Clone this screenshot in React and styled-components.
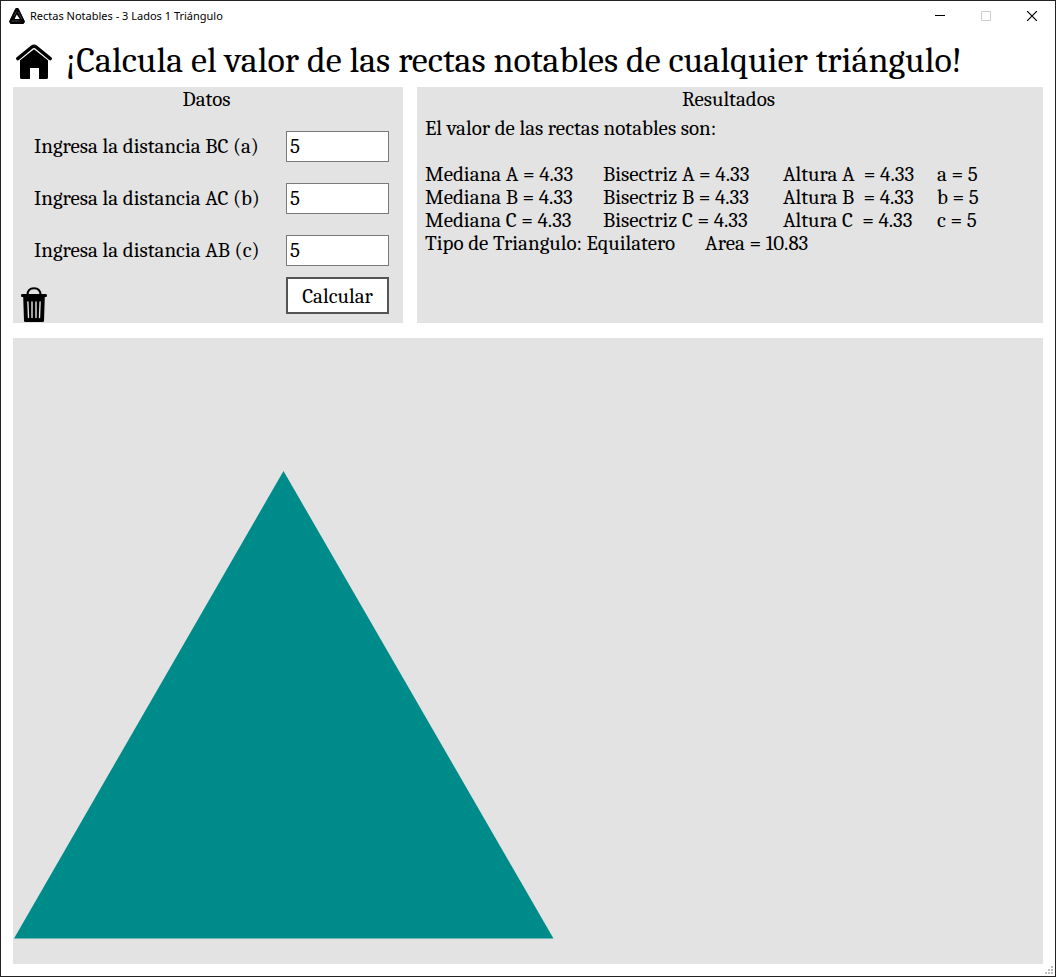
import React, { useState } from "react";
import styled, { createGlobalStyle } from "styled-components";

const GlobalStyle = createGlobalStyle`
  *, *::before, *::after { box-sizing: border-box; }
  body {
    margin: 0;
    background: #fff;
    color: #000;
    font-family: Cambria, Caladea, "Liberation Serif", serif;
    font-size: 21px;
    line-height: 23px;
  }
`;

const Window = styled.div`
  position: relative;
  display: flex;
  flex-direction: column;
  min-height: 100vh;
  border: 1px solid #222;
  background: #fff;
`;

const TitleBar = styled.header`
  display: flex;
  align-items: center;
  height: 30px;
  padding-left: 8px;
  font: 11px/16px "Noto Sans", "Open Sans", sans-serif;
`;

const WindowTitle = styled.span`
  flex: 1;
  margin-left: 5px;
`;

const WindowButton = styled.button`
  display: flex;
  align-items: center;
  justify-content: center;
  width: 46px;
  height: 30px;
  padding: 0;
  border: 0;
  background: none;
  color: #000;

  &:disabled { color: #ccc; }
`;

const Banner = styled.div`
  display: flex;
  align-items: center;
  height: 56px;
  padding: 4px 12px 0 15px;
  gap: 14px;
`;

const IconButton = styled.button`
  display: flex;
  padding: 0;
  border: 0;
  background: none;
  color: #000;
`;

const Heading = styled.h1`
  margin: 0;
  font-size: 36px;
  line-height: 42px;
  font-weight: 400;
  white-space: nowrap;
`;

const Content = styled.main`
  display: flex;
  flex: 1;
  flex-direction: column;
  gap: 15px;
  padding: 0 12px 12px;
`;

const Panels = styled.div`
  display: grid;
  grid-template-columns: 390px 1fr;
  gap: 14px;
`;

const Panel = styled.section`
  display: flex;
  flex-direction: column;
  min-height: 236px;
  background: #e3e3e3;
`;

const PanelTitle = styled.h2`
  margin: 0;
  padding: 0 3px 1px 0;
  font-size: 21px;
  line-height: 25px;
  font-weight: 400;
  text-align: center;
`;

const Form = styled.form`
  display: flex;
  flex: 1;
  flex-direction: column;
  padding: 18px 14px 0 21px;
`;

const Field = styled.label`
  display: flex;
  align-items: center;
  justify-content: space-between;
  height: 31px;
  margin-bottom: 21px;
`;

const NumberInput = styled.input`
  width: 103px;
  height: 31px;
  padding: 0 3px 1px;
  border: 1px solid #7a7a7a;
  border-radius: 0;
  background: #fff;
  color: #000;
  font: inherit;
  outline: 0;
`;

const Actions = styled.div`
  display: flex;
  justify-content: space-between;
  margin: -10px 0 0 -13px;
`;

const ClearButton = styled(IconButton)`
  padding-top: 10px;
`;

const CalculateButton = styled.button`
  width: 103px;
  height: 37px;
  padding: 1px 0 0;
  border: 2px solid #555;
  background: #fff;
  color: #000;
  font: inherit;
`;

const Results = styled.div`
  padding: 4px 8px;
`;

const Line = styled.p`
  margin: 0;
  white-space: pre;
`;

const ResultTable = styled.table`
  margin-top: 23px;
  border-collapse: collapse;
  table-layout: fixed;
  width: 574px;

  td {
    padding: 0;
    white-space: pre;
  }
`;

const Col = styled.col`
  width: ${(p) => p.$width}px;
`;

const Summary = styled.p`
  display: flex;
  gap: 30px;
  margin: 0;
`;

const Drawing = styled.section`
  flex: 1;
  padding: 133px 0 25px 1px;
  background: #e3e3e3;

  svg { display: block; }
`;

const Grip = styled.svg`
  position: absolute;
  right: 2px;
  bottom: 2px;
`;

const fields = [
  { id: "a", label: "Ingresa la distancia BC (a)" },
  { id: "b", label: "Ingresa la distancia AC (b)" },
  { id: "c", label: "Ingresa la distancia AB (c)" },
];

const rows = [
  { vertex: "A", side: "a" },
  { vertex: "B", side: "b" },
  { vertex: "C", side: "c" },
];

const LogoIcon = () => (
  <svg width="16" height="16" viewBox="0 0 16 16" aria-hidden="true">
    <path d="M6.8 0.5H9.2L15.5 13.5 14.5 15.5H1.5L0.5 13.5Z" stroke="#000" strokeLinejoin="round" />
    <path d="M7.8 6.5 10.8 11H5.6Z" fill="#fff" />
    <path d="M9 4 12.8 11M2.5 13H10.5M5 8 7.4 3.4" stroke="#888" strokeWidth="0.5" />
  </svg>
);

const HomeIcon = () => (
  <svg width="36" height="38" viewBox="0 -2 36 38" aria-hidden="true">
    <path d="M4 16 18 4.4 32 16V33.5Q32 35 30.5 35H23V24H14V35H5.5Q4 35 4 33.5Z" />
    <path d="M1.8 15.4 18 2.6 34.2 15.4" fill="none" stroke="#fff" strokeWidth="4" />
    <path d="M1.8 14.6 15.9 3Q18 1.3 20.1 3L34.2 14.6" fill="none" stroke="#000" strokeWidth="3.4" strokeLinecap="round" />
  </svg>
);

const TrashIcon = () => (
  <svg width="26" height="36" viewBox="0 0 26 36" aria-hidden="true">
    <path d="M6.5 8C6.5 3.5 9 1.2 13 1.2S19.5 3.5 19.5 8" fill="none" stroke="#000" strokeWidth="2" />
    <path d="M1 7H25Q26 7 26 8.5T25 10H23.8L23 34Q22.9 35 21.7 35H4.3Q3.1 35 3 34L2.2 10H1Q0 10 0 8.5T1 7Z" />
    <path d="M6.9 15 7.5 30.5M11 15V30.5M15 15V30.5M19.1 15 18.5 30.5" stroke="#e3e3e3" strokeWidth="1.4" strokeLinecap="round" />
  </svg>
);

export default function App() {
  const [sides, setSides] = useState({ a: "5", b: "5", c: "5" });

  return (
    <Window>
      <GlobalStyle />
      <TitleBar>
        <LogoIcon />
        <WindowTitle>Rectas Notables - 3 Lados 1 Triángulo</WindowTitle>
        <WindowButton aria-label="Minimizar">
          <svg width="10" height="10" aria-hidden="true"><path d="M0 4.5H10" stroke="currentColor" /></svg>
        </WindowButton>
        <WindowButton aria-label="Maximizar" disabled>
          <svg width="10" height="10" aria-hidden="true"><path d="M.5.5H9.5V9.5H.5Z" fill="none" stroke="currentColor" /></svg>
        </WindowButton>
        <WindowButton aria-label="Cerrar">
          <svg width="10" height="10" aria-hidden="true"><path d="M0 0 10 10M10 0 0 10" stroke="currentColor" strokeWidth="1.2" /></svg>
        </WindowButton>
      </TitleBar>
      <Banner>
        <IconButton aria-label="Inicio"><HomeIcon /></IconButton>
        <Heading>¡Calcula el valor de las rectas notables de cualquier triángulo!</Heading>
      </Banner>
      <Content>
        <Panels>
          <Panel>
            <PanelTitle>Datos</PanelTitle>
            <Form onSubmit={(e) => e.preventDefault()}>
              {fields.map(({ id, label }) => (
                <Field key={id}>
                  {label}
                  <NumberInput
                    value={sides[id]}
                    onChange={(e) => setSides({ ...sides, [id]: e.target.value })}
                  />
                </Field>
              ))}
              <Actions>
                <ClearButton
                  type="button"
                  aria-label="Borrar"
                  onClick={() => setSides({ a: "", b: "", c: "" })}
                >
                  <TrashIcon />
                </ClearButton>
                <CalculateButton type="submit">Calcular</CalculateButton>
              </Actions>
            </Form>
          </Panel>
          <Panel>
            <PanelTitle>Resultados</PanelTitle>
            <Results>
              <Line>El valor de las rectas notables son:</Line>
              <ResultTable>
                <colgroup>
                  <Col $width={178} />
                  <Col $width={180} />
                  <Col $width={154} />
                  <Col $width={62} />
                </colgroup>
                <tbody>
                  {rows.map(({ vertex, side }) => (
                    <tr key={vertex}>
                      <td>{`Mediana ${vertex} = 4.33`}</td>
                      <td>{`Bisectriz ${vertex} = 4.33`}</td>
                      <td>{`Altura ${vertex}  = 4.33`}</td>
                      <td>{`${side} = 5`}</td>
                    </tr>
                  ))}
                </tbody>
              </ResultTable>
              <Summary>
                <span>Tipo de Triangulo: Equilatero</span>
                <span>Area = 10.83</span>
              </Summary>
            </Results>
          </Panel>
        </Panels>
        <Drawing>
          <svg width="540" height="468" viewBox="0 0 540 468" role="img" aria-label="Triángulo equilátero">
            <path d="M0 467.5 269.5 0 539.5 467.5Z" fill="#008b8b" />
          </svg>
        </Drawing>
      </Content>
      <Grip width="8" height="8" aria-hidden="true">
        <path d="M6 0h2v2h-2zM3 3h2v2h-2zM6 3h2v2h-2zM0 6h2v2h-2zM3 6h2v2h-2zM6 6h2v2h-2z" fill="#bfbfbf" />
      </Grip>
    </Window>
  );
}
